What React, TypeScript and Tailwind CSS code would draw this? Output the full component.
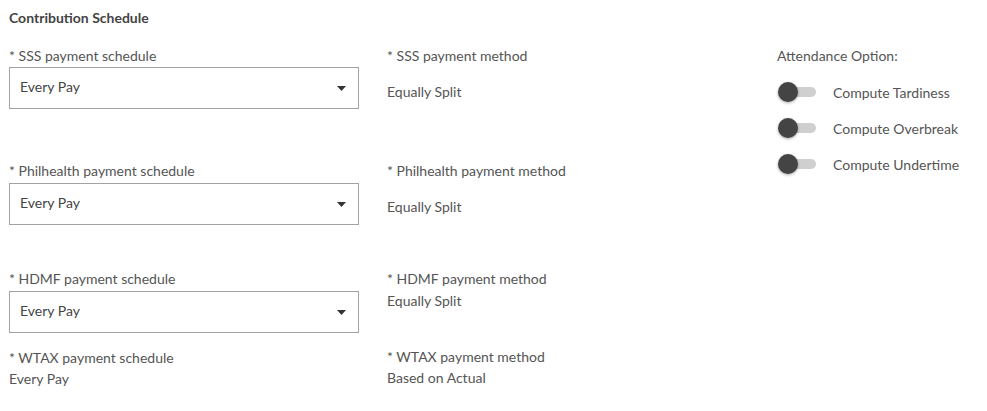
const FONT = "font-['Lato','Noto_Sans',sans-serif]";

function Select({ value }: { value: string }) {
  return (
    <div className="flex h-[42px] w-[350px] items-center justify-between border border-[#a3a3a3] bg-white pb-[3px] pl-[10px] pr-[12px] text-[14px] text-[#444]">
      <span>{value}</span>
      <svg width="9" height="5" viewBox="0 0 9 5" className="mt-[3px]">
        <path d="M0 0h9L4.5 5z" fill="#333" />
      </svg>
    </div>
  );
}

function Label({ children }: { children: React.ReactNode }) {
  return <div className="h-5 text-[14px] leading-5 text-[#555]">{children}</div>;
}

function Toggle({ label }: { label: string }) {
  return (
    <div className="flex h-9 items-center">
      <div className="relative h-5 w-[38px]">
        <div className="absolute left-[2px] top-[5px] h-[10px] w-[36px] rounded-full bg-[#cfcfcf]" />
        <div className="absolute left-0 top-0 h-5 w-5 rounded-full bg-[#444] shadow-[0_1px_3px_rgba(0,0,0,0.35)]" />
      </div>
      <span className="ml-[17px] text-[14px] text-[#555]">{label}</span>
    </div>
  );
}

export default function App() {
  return (
    <div className={`${FONT} h-[411px] w-[987px] bg-white pl-[9px] pt-[8px]`}>
      <div className="h-5 text-[14px] font-bold leading-5 text-[#444]">Contribution Schedule</div>
      <div className="mt-[18px] flex">
        <div className="w-[378px]">
          <Label>* SSS payment schedule</Label>
          <div className="mt-[1px]">
            <Select value="Every Pay" />
          </div>
          <div className="mt-[52px]">
            <Label>* Philhealth payment schedule</Label>
          </div>
          <div className="mt-[2px]">
            <Select value="Every Pay" />
          </div>
          <div className="mt-[44px]">
            <Label>* HDMF payment schedule</Label>
          </div>
          <div className="mt-[2px]">
            <Select value="Every Pay" />
          </div>
          <div className="mt-[15px]">
            <Label>* WTAX payment schedule</Label>
          </div>
          <div className="mt-[1px]">
            <Label>Every Pay</Label>
          </div>
        </div>
        <div className="w-[390px]">
          <Label>* SSS payment method</Label>
          <div className="mt-4">
            <Label>Equally Split</Label>
          </div>
          <div className="mt-[59px]">
            <Label>* Philhealth payment method</Label>
          </div>
          <div className="mt-4">
            <Label>Equally Split</Label>
          </div>
          <div className="mt-[52px]">
            <Label>* HDMF payment method</Label>
          </div>
          <div className="mt-[2px]">
            <Label>Equally Split</Label>
          </div>
          <div className="mt-[36px]">
            <Label>* WTAX payment method</Label>
          </div>
          <div className="mt-[1px]">
            <Label>Based on Actual</Label>
          </div>
        </div>
        <div>
          <Label>Attendance Option:</Label>
          <div className="ml-[1px] mt-[8px]">
            <Toggle label="Compute Tardiness" />
            <Toggle label="Compute Overbreak" />
            <Toggle label="Compute Undertime" />
          </div>
        </div>
      </div>
    </div>
  );
}
